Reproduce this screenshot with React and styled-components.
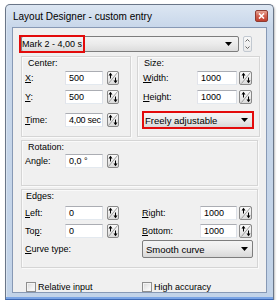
import React from 'react';
import styled, { createGlobalStyle } from 'styled-components';

const Global = createGlobalStyle`
  html, body { margin: 0; padding: 0; background: #ffffff; }
  body { font-family: "Liberation Sans", Arial, sans-serif; font-size: 9px; color: #000; }
  * { box-sizing: border-box; }
`;

const Window = styled.div`
  margin: 4px 0 0 5px;
  width: 269px;
  height: 296px;
  border: 1px solid #6a7688;
  border-bottom-color: #3c68b4;
  border-radius: 5px 5px 0 0;
  background: linear-gradient(180deg, #dce6f2 0px, #c8d7ea 22px, #c2d3e8 100%);
  box-shadow: 1px 1px 2px rgba(0, 0, 0, 0.25), inset 0 -2px 0 #79a3e4, inset 2px 0 0 -1px #d8e3f0;
  display: flex;
  flex-direction: column;
`;

const TitleBar = styled.div`
  height: 22px;
  flex: none;
  display: flex;
  align-items: center;
  justify-content: space-between;
  padding: 0 5px 0 7px;
`;

const Title = styled.span`
  font-size: 10px;
  color: #000;
  margin-top: 1px;
`;

const CloseButton = styled.div`
  width: 13px;
  height: 12px;
  border: 1px solid #8e3b31;
  border-radius: 2px;
  background: linear-gradient(180deg, #e7a595 0%, #d2604f 50%, #c0402f 100%);
  display: flex;
  align-items: center;
  justify-content: center;
`;

const Client = styled.div`
  flex: 1;
  margin: 0 6px 6px 6px;
  border: 1px solid #8799b5;
  background: #f0f0f0;
  display: flex;
  flex-direction: column;
  padding: 8px 8px 0 8px;
`;

const TopRow = styled.div`
  display: flex;
  align-items: center;
  gap: 4px;
  height: 16px;
  margin-right: 6px;
`;

const Combo = styled.div`
  flex: 1;
  height: 16px;
  border: 1px solid #7d7d7d;
  border-radius: 2px;
  background: linear-gradient(180deg, #f4f4f4 0%, #ebebeb 50%, #dcdcdc 100%);
  display: flex;
  align-items: stretch;
  justify-content: space-between;
  padding-right: 6px;
`;

const Highlight = styled.span`
  display: flex;
  align-items: center;
  margin: -2px 0 -2px -3px;
  padding: 0 1px;
  border: 2px solid #e30b0b;
  white-space: nowrap;
`;

const ArrowBox = styled.span`
  display: flex;
  align-items: center;
`;

const MiniSpin = styled.div`
  width: 9px;
  height: 16px;
  border: 1px solid #c2c9d1;
  border-radius: 2px;
  background: linear-gradient(180deg, #f8f8f8, #e9e9e9);
  display: flex;
  align-items: center;
  justify-content: center;
`;

const GroupRow = styled.div`
  display: flex;
  gap: 6px;
  margin-top: 4px;
`;

const Group = styled.div`
  border: 1px solid #d5d5d5;
  box-shadow: inset 1px 1px 0 #fafafa, 1px 1px 0 #fafafa;
  padding: 0 ${p => p.$pr || 4}px ${p => p.$pb ?? 9}px ${p => p.$pl || 3}px;
  margin-top: ${p => p.$mt || 0}px;
  width: ${p => (p.$w ? `${p.$w}px` : 'auto')};
  flex: ${p => (p.$w ? 'none' : '1')};
  display: flex;
  flex-direction: column;
`;

const GroupTitle = styled.div`
  height: 12px;
  line-height: 12px;
  padding-left: ${p => p.$indent ?? 3}px;
`;

const Row = styled.div`
  display: flex;
  align-items: center;
  height: 14px;
  margin-top: ${p => p.$mt || 0}px;
`;

const Label = styled.span`
  width: ${p => p.$w}px;
  flex: none;
  white-space: nowrap;
  u { text-decoration: underline; }
`;

const Input = styled.div`
  width: ${p => p.$w}px;
  height: 14px;
  flex: none;
  border: 1px solid;
  border-color: #abadb3 #dbdfe6 #e3e9ef #e2e3ea;
  background: #fff;
  padding-left: 3px;
  line-height: 12px;
  white-space: nowrap;
  overflow: hidden;
  letter-spacing: ${p => p.$tight ? '-0.3px' : 'normal'};
`;

const SpinButton = styled.div`
  width: ${p => p.$w || 12}px;
  height: 14px;
  flex: none;
  margin-left: ${p => p.$gap || 4}px;
  border: 1px solid #8a8a8a;
  border-radius: 2px;
  background: linear-gradient(180deg, #fbfbfb 0%, #ececec 50%, #dadada 100%);
  display: flex;
  align-items: center;
  justify-content: center;
`;

const Dropdown = styled.div`
  width: ${p => p.$w}px;
  height: 18px;
  margin-left: ${p => p.$ml || 0}px;
  margin-top: ${p => p.$mt || 0}px;
  border: ${p => (p.$highlight ? '2px solid #e30b0b' : '1px solid #7d7d7d')};
  border-radius: ${p => (p.$highlight ? '0' : '2px')};
  background: linear-gradient(180deg, #f4f4f4 0%, #ebebeb 50%, #d8d8d8 100%);
  display: flex;
  align-items: center;
  justify-content: space-between;
  padding: 0 4px 0 ${p => (p.$highlight ? 1 : 3)}px;
  font-size: 9.5px;
  white-space: nowrap;
`;

const Pair = styled.div`
  display: grid;
  grid-template-columns: 117px 1fr;
  align-items: center;
  margin-top: ${p => p.$mt || 0}px;
`;

const CheckRow = styled.div`
  display: grid;
  grid-template-columns: 116px 1fr;
  margin-top: 14px;
  padding-left: 5px;
`;

const CheckItem = styled.label`
  display: flex;
  align-items: center;
  gap: 2px;
  white-space: nowrap;
`;

const CheckBox = styled.span`
  width: 10px;
  height: 10px;
  flex: none;
  border: 1px solid #8f8f8f;
  background: linear-gradient(135deg, #d8d8d8 0%, #f2f2f2 60%, #ffffff 100%);
  box-shadow: inset 0 0 0 1px #f4f4f4;
`;

const SpinIcon = () => (
  <svg width="10" height="12" viewBox="0 0 10 12">
    <line x1="0.5" y1="11.5" x2="9.5" y2="0.5" stroke="#8a8a8a" strokeWidth="0.8" />
    <line x1="2.5" y1="2.5" x2="2.5" y2="6.5" stroke="#000" strokeWidth="1" />
    <polygon points="0.5,3.5 2.5,0.8 4.5,3.5" fill="#000" />
    <line x1="7.5" y1="5.5" x2="7.5" y2="9.5" stroke="#000" strokeWidth="1" />
    <polygon points="5.5,8.5 7.5,11.2 9.5,8.5" fill="#000" />
  </svg>
);

const DownArrow = () => (
  <svg width="7" height="4" viewBox="0 0 7 4">
    <polygon points="0,0 7,0 3.5,4" fill="#000" />
  </svg>
);

const Spin = ({ w, gap }) => (
  <SpinButton $w={w} $gap={gap}>
    <SpinIcon />
  </SpinButton>
);

const Field = ({ label, lw, value, iw, sw, gap, mt, tight }) => (
  <Row $mt={mt}>
    <Label $w={lw}>{label}</Label>
    <Input $w={iw} $tight={tight}>{value}</Input>
    <Spin w={sw} gap={gap} />
  </Row>
);

export default function App() {
  return (
    <>
      <Global />
      <Window>
        <TitleBar>
          <Title>Layout Designer - custom entry</Title>
          <CloseButton>
            <svg width="7" height="6" viewBox="0 0 7 6">
              <path d="M1 0.5 L6 5.5 M6 0.5 L1 5.5" stroke="#fff" strokeWidth="1.6" />
            </svg>
          </CloseButton>
        </TitleBar>
        <Client>
          <TopRow>
            <Combo>
              <Highlight>Mark 2 - 4,00 s</Highlight>
              <ArrowBox><DownArrow /></ArrowBox>
            </Combo>
            <MiniSpin>
              <svg width="5" height="12" viewBox="0 0 5 12">
                <path d="M0.5 3.5 L2.5 1.5 L4.5 3.5" stroke="#555" strokeWidth="0.9" fill="none" />
                <path d="M0.5 8.5 L2.5 10.5 L4.5 8.5" stroke="#555" strokeWidth="0.9" fill="none" />
              </svg>
            </MiniSpin>
          </TopRow>

          <GroupRow>
            <Group $w={110}>
              <GroupTitle>Center:</GroupTitle>
              <Field mt={2} label={<><u>X</u>:</>} lw={40} value="500" iw={38} />
              <Field mt={5} label={<><u>Y</u>:</>} lw={40} value="500" iw={38} />
              <Field mt={9} label={<><u>T</u>ime:</>} lw={40} value="4,00 sec" iw={38} tight />
            </Group>
            <Group $pl={5} $pr={5} $pb={7}>
              <GroupTitle $indent={1}>Size:</GroupTitle>
              <Field mt={2} label={<><u>W</u>idth:</>} lw={54} value="1000" iw={40} sw={13} gap={2} />
              <Field mt={5} label={<><u>H</u>eight:</>} lw={54} value="1000" iw={40} sw={13} gap={2} />
              <Dropdown $highlight $w={112} $ml={-1} $mt={7}>
                <span>Freely adjustable</span>
                <DownArrow />
              </Dropdown>
            </Group>
          </GroupRow>

          <Group $mt={3}>
            <GroupTitle>Rotation:</GroupTitle>
            <Field mt={1} label="Angle:" lw={40} value="0,0 °" iw={38} />
          </Group>

          <Group $mt={3} $pr={5}>
            <GroupTitle $indent={1}>Edges:</GroupTitle>
            <Pair $mt={4}>
              <Field label={<><u>L</u>eft:</>} lw={40} value="0" iw={38} />
              <Field label={<><u>R</u>ight:</>} lw={58} value="1000" iw={37} sw={13} gap={2} />
            </Pair>
            <Pair $mt={4}>
              <Field label={<>To<u>p</u>:</>} lw={40} value="0" iw={38} />
              <Field label={<><u>B</u>ottom:</>} lw={58} value="1000" iw={37} sw={13} gap={2} />
            </Pair>
            <Pair $mt={2}>
              <Label $w={100}><u>C</u>urve type:</Label>
              <Dropdown $w={111}>
                <span>Smooth curve</span>
                <DownArrow />
              </Dropdown>
            </Pair>
          </Group>

          <CheckRow>
            <CheckItem><CheckBox />Relative input</CheckItem>
            <CheckItem><CheckBox />High accuracy</CheckItem>
          </CheckRow>
        </Client>
      </Window>
    </>
  );
}
